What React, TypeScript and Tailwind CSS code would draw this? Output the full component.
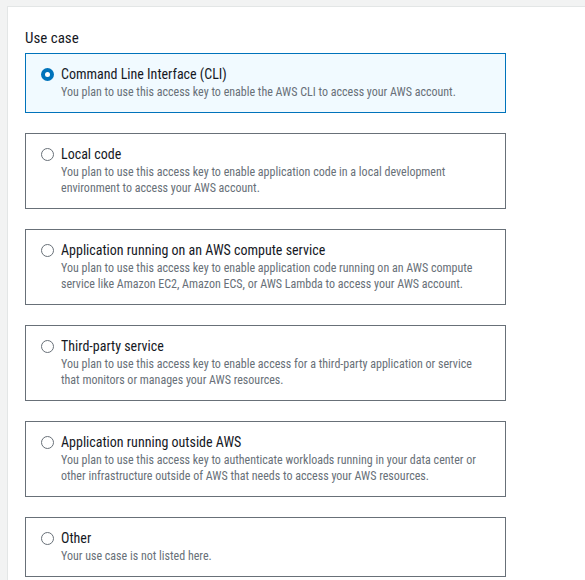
import React from "react";

type Opt = { title: string; desc: string; selected?: boolean };

const options: Opt[] = [
  {
    title: "Command Line Interface (CLI)",
    desc: "You plan to use this access key to enable the AWS CLI to access your AWS account.",
    selected: true,
  },
  {
    title: "Local code",
    desc: "You plan to use this access key to enable application code in a local development environment to access your AWS account.",
  },
  {
    title: "Application running on an AWS compute service",
    desc: "You plan to use this access key to enable application code running on an AWS compute service like Amazon EC2, Amazon ECS, or AWS Lambda to access your AWS account.",
  },
  {
    title: "Third-party service",
    desc: "You plan to use this access key to enable access for a third-party application or service that monitors or manages your AWS resources.",
  },
  {
    title: "Application running outside AWS",
    desc: "You plan to use this access key to authenticate workloads running in your data center or other infrastructure outside of AWS that needs to access your AWS resources.",
  },
  {
    title: "Other",
    desc: "Your use case is not listed here.",
  },
];

function Radio({ selected }: { selected?: boolean }) {
  if (selected) {
    return (
      <span className="mt-[4px] flex h-[13px] w-[13px] shrink-0 items-center justify-center rounded-full bg-[#0073bb]">
        <span className="h-[5px] w-[5px] rounded-full bg-white" />
      </span>
    );
  }
  return (
    <span className="mt-[4px] h-[13px] w-[13px] shrink-0 rounded-full border border-[#687078] bg-white" />
  );
}

export default function App() {
  return (
    <div
      className="h-[580px] w-[585px] overflow-hidden bg-[#f2f3f3] pl-[7px] pt-[6px]"
      style={{ fontFamily: "'Roboto Condensed', Roboto, sans-serif" }}
    >
      <div className="h-[574px] border-l border-t border-[#e3e6e6] bg-white pl-[17px] pt-[20px]">
        <div className="text-[15px] leading-[22px] text-[#16191f]">Use case</div>
        <div className="mt-[4px] flex w-[481px] flex-col gap-[20px]">
          {options.map((o) => (
            <div
              key={o.title}
              className={
                o.selected
                  ? "flex gap-[7px] border border-[#0073bb] bg-[#f1faff] pb-[12px] pl-[15px] pr-[12px] pt-[10px]"
                  : "flex gap-[7px] border border-[#687078] bg-white pb-[12px] pl-[15px] pr-[12px] pt-[10px]"
              }
            >
              <Radio selected={o.selected} />
              <div className="flex flex-col">
                <div className="text-[14px] leading-[20px] text-[#16191f]">{o.title}</div>
                <div className="text-[12px] leading-[16px] text-[#687078]">{o.desc}</div>
              </div>
            </div>
          ))}
        </div>
      </div>
    </div>
  );
}
